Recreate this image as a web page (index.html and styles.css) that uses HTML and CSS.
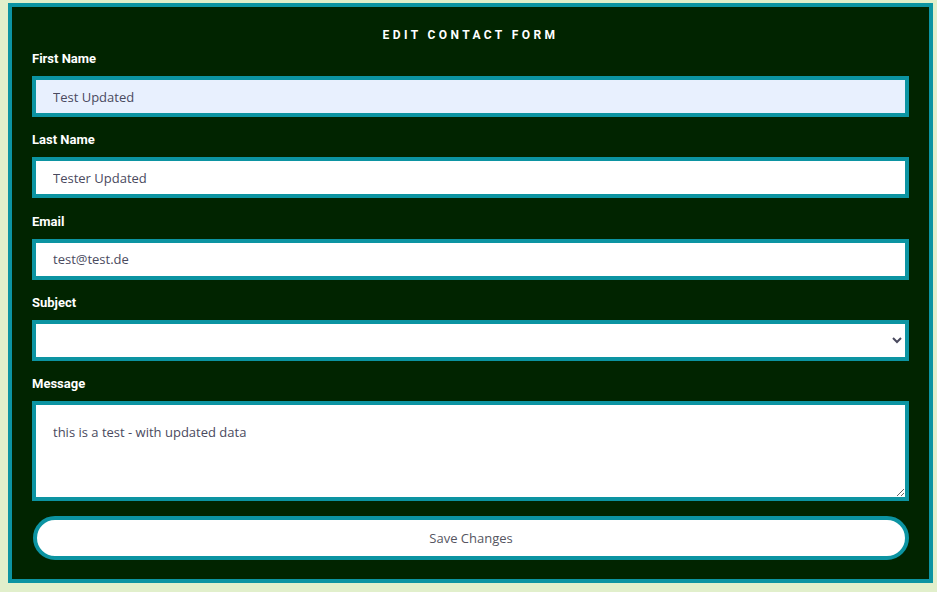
FILE: index.html
```html
<!DOCTYPE html>
<html lang="en">
<head>
<meta charset="utf-8">
<title>Edit Contact Form</title>
<link rel="stylesheet" href="styles.css">
</head>
<body>
<div class="card">
  <h1 class="title">EDIT CONTACT FORM</h1>
  <form class="form">
    <label class="label" for="first">First Name</label>
    <input class="field autofill" id="first" type="text" value="Test Updated">
    <label class="label" for="last">Last Name</label>
    <input class="field" id="last" type="text" value="Tester Updated">
    <label class="label" for="email">Email</label>
    <input class="field" id="email" type="email" value="test@test.de">
    <label class="label" for="subject">Subject</label>
    <select class="field select" id="subject">
      <option value=""></option>
    </select>
    <label class="label" for="message">Message</label>
    <textarea class="field area" id="message">this is a test - with updated data</textarea>
    <button class="save" type="button">Save Changes</button>
  </form>
</div>
</body>
</html>
```

FILE: styles.css
```css
html, body {
  background: #e1efcb;
}
body {
  margin: 3px 4px 8px 8px;
}
.card {
  background: #012400;
  border: 4px solid #0c94a2;
  padding: 20px 20px 19px 20px;
}
.title {
  margin: 0;
  text-align: center;
  font-family: Roboto, "Liberation Sans", sans-serif;
  font-weight: 700;
  font-size: 12px;
  line-height: 16px;
  letter-spacing: 3.4px;
  color: #ffffff;
}
.form {
  display: flex;
  flex-direction: column;
}
.label {
  font-family: Roboto, "Liberation Sans", sans-serif;
  font-weight: 700;
  font-size: 13px;
  line-height: 16px;
  color: #ffffff;
  margin: 15.25px 0 9px 0;
}
.title + .form .label:first-child {
  margin-top: 8px;
  margin-bottom: 9px;
}
.field {
  box-sizing: border-box;
  width: 100%;
  height: 41px;
  flex: none;
  margin: 0;
  border: 4px solid #0c94a2;
  border-radius: 0;
  background: #ffffff;
  padding: 0 17px;
  font-family: "Open Sans", sans-serif;
  font-size: 13px;
  color: #4a4a5e;
  outline: none;
}
.autofill {
  background: #e8f0fe;
}
.select {
  padding: 0 12px;
}
.area {
  height: 100px;
  padding: 18px 17px;
  resize: vertical;
  line-height: 18px;
}
.save {
  box-sizing: border-box;
  flex: none;
  margin: 15px 0 0 1px;
  width: calc(100% - 1px);
  height: 44px;
  border: 4px solid #0c94a2;
  border-radius: 22px;
  background: #ffffff;
  font-family: "Open Sans", sans-serif;
  font-size: 13px;
  color: #55555f;
  cursor: pointer;
}
```
